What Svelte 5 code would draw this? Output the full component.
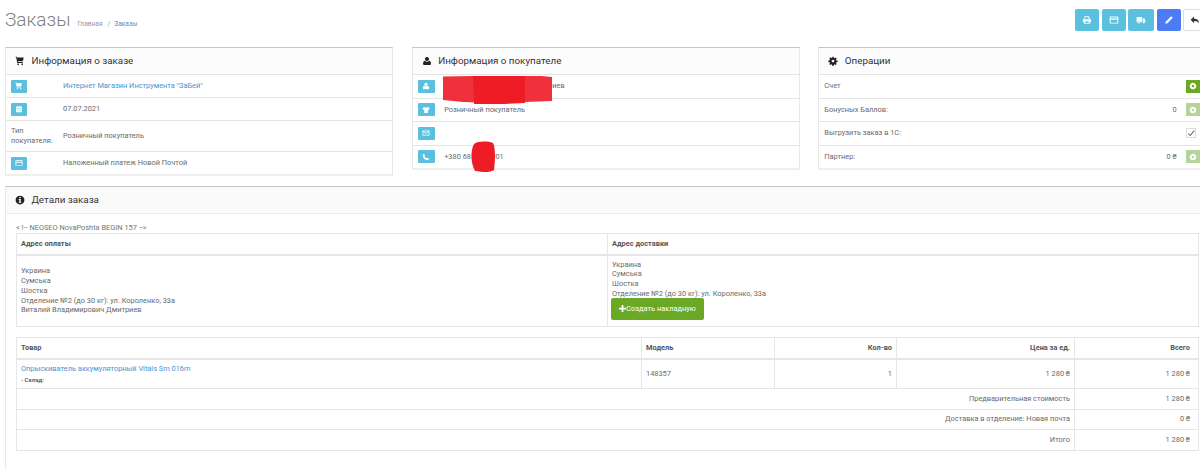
<script>
  const cart = "M1 1h2l.5 1.500H14l-1.500 6H4.500l.3 1.200H12.500v1.300H3.500L2 2.300H1zM5 12a1.300 1.300 0 1 0 .01 0zM11.500 12a1.300 1.300 0 1 0 .01 0z";
  const user = "M8 1.500a3.300 3.300 0 1 1-.01 0zM4.500 7.500c1 1 2.200 1.500 3.500 1.500s2.500-.5 3.500-1.500c2 .3 2.800 2.300 2.800 5 0 1.200-.8 2-2 2h-8.600c-1.200 0-2-.8-2-2 0-2.700.8-4.700 2.800-5z";
  const cal = "M3 3h2V1.500h1.500V3h3V1.500H11V3h2a1 1 0 0 1 1 1v9.500a1 1 0 0 1-1 1H3a1 1 0 0 1-1-1V4a1 1 0 0 1 1-1zM3.500 6.500v1.700h2V6.500zM7 6.500v1.700h2V6.500zM10.500 6.500v1.700h2V6.500zM3.500 9.500v1.700h2V9.500zM7 9.500v1.700h2V9.500zM10.500 9.500v1.700h2V9.500z";
  const card = "M2 2.500h12a1 1 0 0 1 1 1v9a1 1 0 0 1-1 1H2a1 1 0 0 1-1-1v-9a1 1 0 0 1 1-1zM2.500 7.500v5h11v-5zM2.500 4v1.500h11V4z";
  const shirt = "M4.500 2L6 2.500C7 4 9 4 10 2.500L11.500 2l3.500 2-1 4-2-.5V14H4.500V7.500l-2 .5-1-4z";
  const mail = "M2 3h12a1 1 0 0 1 1 1v8a1 1 0 0 1-1 1H2a1 1 0 0 1-1-1V4a1 1 0 0 1 1-1zM2.500 5.800V11.500h11V5.800L8 9.500zM3.200 4.500L8 7.800l4.800-3.300z";
  const phone = "M4 1.500l2 3.500-1.200 1.500c.8 1.800 2.200 3.200 4.200 4.200l1.500-1.200 3.500 2c-.3 1.500-1.500 2.800-3 2.800C6 14.300 1.700 10 1.500 4.500 1.500 3 2.500 1.800 4 1.500z";
  const plus = "M8 1.500a6.500 6.500 0 1 1-.01 0zM8 5.500a2.500 2.500 0 1 0 .01 0z";
  const gear = "M7 1h2l.4 2 1.300.6 1.800-1.100 1.400 1.400-1.100 1.800.6 1.300 2 .4v2l-2 .4-.6 1.300 1.100 1.800-1.400 1.400-1.800-1.100-1.300.6-.4 2H7l-.4-2-1.300-.6-1.800 1.100-1.400-1.400 1.100-1.800-.6-1.300-2-.4V7l2-.4.6-1.300L2.100 3.500 3.500 2.100l1.800 1.100L6.600 2.600zM8 5.800a2.200 2.200 0 1 0 .01 0z";
  const info = "M8 1a7 7 0 1 1-.01 0zM6.800 3v2.300h2.400V3zM5.800 6.500v1.500h1v3h-1v1.500h4.400V11h-1V6.500z";
  const printer = "M4 1.500h6l2 2v3h1.500a1 1 0 0 1 1 1V12H12v2.500H4V12H1.500V7.500a1 1 0 0 1 1-1H4zM5.300 2.800v4h5.400v-2.500H9V2.800zM5.300 10.500v2.700h5.400v-2.700z";
  const truck = "M1 3h9v8.500H6.500a1.800 1.800 0 0 0-3.500 0H1zM11 5.500h2L15 8v3.500h-.8a1.800 1.800 0 0 0-3.200 0zM4.700 11a1.300 1.300 0 1 0 .01 0zM12.600 11a1.300 1.300 0 1 0 .01 0z";
  const pencil = "M11.500 2l2.500 2.500-8.500 8.500L2 14l1-3.500z";
  const reply = "M6.500 2.500V6C11 6 14.500 8 14.500 13.500 13 10.500 11 9.500 6.500 9.500V13L1 7.700z";

  const orderRows = [
    { icon: cart, text: 'Интернет Магазин Инструмента "ЗаБей"', link: true },
    { icon: cal, text: '07.07.2021' },
    { label: 'Тип покупателя:', text: 'Розничный покупатель', tall: true },
    { icon: card, text: 'Наложенный платеж Новой Почтой' }
  ];
  const buyerRows = [
    { icon: user, text: 'Виталий Владимирович Дмитриев' },
    { icon: shirt, text: 'Розничный покупатель' },
    { icon: mail, text: '' },
    { icon: phone, text: '+380 68 0000 901' }
  ];
  const opRows = [
    { label: 'Счет', btn: 'on' },
    { label: 'Бонусных Баллов:', value: '0', btn: 'off' },
    { label: 'Выгрузить заказ в 1С:', check: true },
    { label: 'Партнер:', value: '0 ₴', btn: 'off' }
  ];
  const address = ['Украина', 'Сумська', 'Шостка', 'Отделение №2 (до 30 кг): ул. Короленко, 33а'];
  const summary = [
    ['Предварительная стоимость', '1 280 ₴'],
    ['Доставка в отделение: Новая почта', '0 ₴'],
    ['Итого', '1 280 ₴']
  ];
  const topButtons = [
    { icon: printer, cls: 'info', w: 'w24' },
    { icon: card, cls: 'info', w: 'w24' },
    { icon: truck, cls: 'info', w: 'w26' },
    { icon: pencil, cls: 'primary', w: 'w24' },
    { icon: reply, cls: 'plain', w: 'w24' }
  ];
</script>

{#snippet ico(d, size)}
  <svg width={size} height={size} viewBox="0 0 16 16" aria-hidden="true"><path fill="currentColor" fill-rule="evenodd" d={d} /></svg>
{/snippet}

<div class="page">
  <header class="top">
    <div class="crumbs">
      <h1>Заказы</h1>
      <span class="crumb">Главная</span>
      <span class="crumb sep">/</span>
      <a class="crumb-link" href="#top">Заказы</a>
    </div>
    <div class="actions">
      {#each topButtons as b}
        <button class="tbtn {b.cls} {b.w}">{@render ico(b.icon, 10)}</button>
      {/each}
    </div>
  </header>

  <div class="cols">
    <section class="panel">
      <div class="head">{@render ico(cart, 10)}<h3>Информация о заказе</h3></div>
      {#each orderRows as r}
        <div class="row order" class:tall={r.tall}>
          {#if r.icon}
            <span class="ibtn">{@render ico(r.icon, 8)}</span>
          {:else}
            <span class="lab">{r.label}</span>
          {/if}
          {#if r.link}<a href="#top">{r.text}</a>{:else}<span>{r.text}</span>{/if}
        </div>
      {/each}
    </section>

    <section class="panel">
      <div class="head">{@render ico(user, 10)}<h3>Информация о покупателе</h3></div>
      {#each buyerRows as r}
        <div class="row buyer half">
          <span class="ibtn wide">{@render ico(r.icon, 8)}</span>
          <span>{r.text}</span>
        </div>
      {/each}
      <svg class="scrib" width="150" height="130" viewBox="0 0 150 130" aria-hidden="true">
        <path fill="#f0303a" d="M30 28.500L60 28 128 28 139 29 139 53 112 54 82 55 50 54 30 52z" />
        <path fill="#ee1c25" d="M60 28H112V55L90 56 61 56z" />
        <path fill="#ee1c25" d="M61 96C65 93 74 93 80 95 83 100 82 116 81 122 76 125 70 124 62 123 58 116 57 103 61 96z" />
      </svg>
    </section>

    <section class="panel">
      <div class="head">{@render ico(gear, 10)}<h3>Операции</h3></div>
      {#each opRows as r}
        <div class="row ops half">
          <span class="grow">{r.label}</span>
          {#if r.value}<span class="val">{r.value}</span>{/if}
          {#if r.btn}<span class="gbtn" class:off={r.btn === 'off'}>{@render ico(plus, 8)}</span>{/if}
          {#if r.check}<span class="chk"><svg width="9" height="9" viewBox="0 0 10 10" aria-hidden="true"><path fill="none" stroke="#666" stroke-width="1.300" d="M1.500 5l2.500 2.500 5-6" /></svg></span>{/if}
        </div>
      {/each}
    </section>
  </div>

  <section class="panel details">
    <div class="head dhead">{@render ico(info, 10)}<h3>Детали заказа</h3></div>
    <div class="body">
      <p class="comment">&lt; !-- NEOSEO NovaPoshta BEGIN 157 --&gt;</p>
      <table class="addr">
        <thead>
          <tr><th>Адрес оплаты</th><th>Адрес доставки</th></tr>
        </thead>
        <tbody>
          <tr>
            <td>
              {#each address as line}<div>{line}</div>{/each}
              <div>Виталий Владимирович Дмитриев</div>
            </td>
            <td class="ship">
              {#each address as line}<div>{line}</div>{/each}
              <button class="create">
                <svg width="7" height="7" viewBox="0 0 8 8" aria-hidden="true"><path fill="currentColor" d="M3 0h2v3h3v2H5v3H3V5H0V3h3z" /></svg>Создать накладную
              </button>
            </td>
          </tr>
        </tbody>
      </table>

      <table class="items">
        <colgroup>
          <col class="c1" /><col class="c2" /><col class="c3" /><col class="c4" /><col />
        </colgroup>
        <thead>
          <tr>
            <th>Товар</th><th>Модель</th><th class="r">Кол-во</th><th class="r">Цена за ед.</th><th class="r end">Всего</th>
          </tr>
        </thead>
        <tbody>
          <tr class="prod">
            <td><a href="#top">Опрыскиватель аккумуляторный Vitals Sm 016m</a><div class="stock">- Склад:</div></td>
            <td>148357</td>
            <td class="r">1</td>
            <td class="r">1 280 ₴</td>
            <td class="r end">1 280 ₴</td>
          </tr>
          {#each summary as s}
            <tr class="sum">
              <td class="r" colspan="4">{s[0]}</td>
              <td class="r end">{s[1]}</td>
            </tr>
          {/each}
        </tbody>
      </table>
    </div>
  </section>
</div>

<style>
  :global(body) {
    margin: 0;
    background: #fff;
    overflow: hidden;
  }
  .page {
    width: 1205px;
    height: 469px;
    padding-left: 5px;
    overflow: hidden;
    font-family: Roboto, "Liberation Sans", sans-serif;
    font-size: 7.400px;
    line-height: 10px;
    color: #6a6a6a;
  }
  a {
    color: #4a94d0;
    text-decoration: none;
  }
  .top {
    display: flex;
    justify-content: space-between;
    height: 47px;
    box-sizing: border-box;
    padding-top: 9px;
  }
  .crumbs {
    display: flex;
    align-items: baseline;
    height: 21px;
  }
  h1 {
    margin: 0 7px 0 0;
    font-size: 19px;
    line-height: 21px;
    font-weight: 300;
    color: #808080;
  }
  .crumb {
    font-size: 6.600px;
    color: #999;
  }
  .sep {
    margin: 0 4px 0 5px;
  }
  .crumb-link {
    font-size: 6.600px;
  }
  .actions {
    display: flex;
    gap: 2.500px;
    margin-right: 3px;
  }
  .tbtn {
    height: 22px;
    padding: 0;
    border: 1px solid transparent;
    border-radius: 2px;
    color: #fff;
    display: flex;
    align-items: center;
    justify-content: center;
  }
  .w24 { width: 24px; }
  .w26 { width: 26px; }
  .info { background: #5bc0de; }
  .primary { background: #4c7cf3; }
  .plain {
    background: #fff;
    border-color: #ddd;
    color: #333;
  }
  .cols {
    display: grid;
    grid-template-columns: repeat(3, 388.33px);
    column-gap: 18.33px;
    align-items: start;
  }
  .panel {
    position: relative;
    border: 1px solid #e8e8e8;
    border-top: 1px solid #c4c4c4;
    border-bottom: 2px solid #eee;
    box-sizing: border-box;
  }
  .head {
    display: flex;
    align-items: center;
    gap: 6.500px;
    height: 26px;
    padding-left: 9px;
    background: #fcfcfc;
    color: #222;
    box-sizing: border-box;
  }
  h3 {
    margin: 0;
    font-size: 9.800px;
    font-weight: 400;
    color: #333;
  }
  .row {
    display: flex;
    align-items: center;
    height: 23px;
    border-top: 1px solid #e5e5e5;
    box-sizing: border-box;
  }
  .row.half { height: 23.500px; }
  .row.tall { height: 31px; }
  .order { padding-left: 5px; }
  .order .ibtn { width: 16px; margin-right: 36px; }
  .order .lab { width: 47px; margin-right: 5px; flex: none; }
  .buyer { padding-left: 5px; }
  .buyer .ibtn { margin-right: 9.500px; }
  .ibtn {
    display: flex;
    align-items: center;
    justify-content: center;
    width: 17px;
    height: 13px;
    border-radius: 1px;
    background: #5bc0de;
    color: #fff;
    flex: none;
  }
  .ops { padding-left: 5px; }
  .grow { flex: 1; }
  .val { margin-right: 9px; }
  .gbtn {
    display: flex;
    align-items: center;
    justify-content: center;
    width: 14px;
    height: 13px;
    margin-right: 6px;
    background: #6aa826;
    color: #fff;
    flex: none;
  }
  .gbtn.off { background: #b5d49a; }
  .chk {
    display: flex;
    align-items: center;
    justify-content: center;
    width: 8px;
    height: 8px;
    margin-right: 10px;
    border: 1px solid #ddd;
    background: #fff;
  }
  .scrib {
    position: absolute;
    left: 0;
    top: 0;
    pointer-events: none;
  }
  .details {
    margin-top: 10px;
    width: 1205px;
    border-bottom: none;
    height: 290px;
  }
  .dhead {
    background: #fafafa;
    border-bottom: 1px solid #eee;
    height: 27px;
  }
  .body {
    padding: 0 0 0 10px;
  }
  .comment {
    margin: 0;
    padding-top: 9px;
    height: 19px;
    box-sizing: border-box;
    line-height: 10px;
    color: #777;
  }
  table {
    width: 1183px;
    border-collapse: collapse;
    table-layout: fixed;
    border: 1px solid #e2e2e2;
  }
  th, td {
    border: 1px solid #e6e6e6;
    padding: 0 4px;
    text-align: left;
    font-size: 7.400px;
    font-weight: 400;
    color: #6a6a6a;
    box-sizing: border-box;
  }
  th {
    font-weight: 700;
    color: #555;
    height: 21px;
    border-bottom-width: 2px;
  }
  .addr td {
    height: 72px;
    line-height: 9.800px;
    vertical-align: middle;
  }
  .addr .ship {
    vertical-align: top;
    padding-top: 4px;
  }
  .create {
    display: flex;
    align-items: center;
    justify-content: center;
    width: 93px;
    height: 22px;
    margin: -1px 0 0 -1px;
    padding: 0;
    border: none;
    border-radius: 2px;
    background: #6aa826;
    color: #fff;
    font-family: inherit;
    font-size: 7.400px;
  }
  .items {
    margin-top: 10px;
  }
  .c1 { width: 625px; }
  .c2 { width: 133px; }
  .c3 { width: 122px; }
  .c4 { width: 178px; }
  .r { text-align: right; }
  .end { padding-right: 8px; }
  .prod td { height: 30px; }
  .sum td { height: 20.500px; }
  .stock {
    font-size: 6px;
    line-height: 9px;
    font-weight: 500;
    color: #444;
    margin-top: 1px;
  }
</style>
